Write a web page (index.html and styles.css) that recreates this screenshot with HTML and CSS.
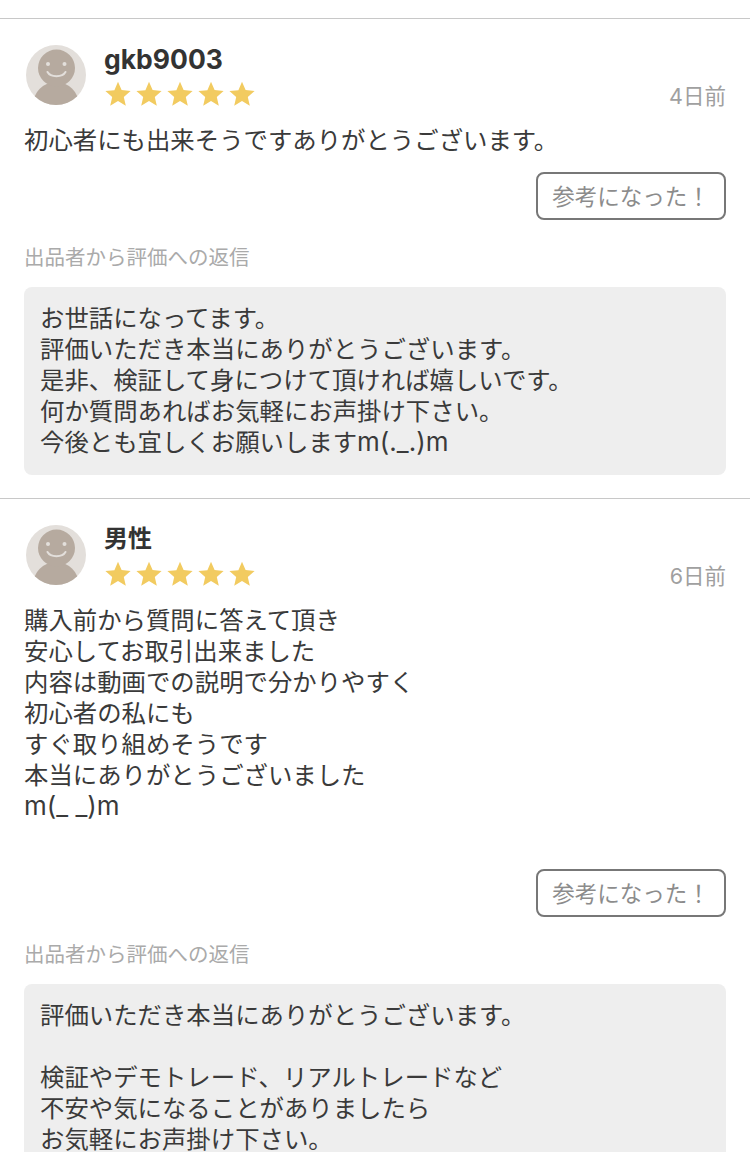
FILE: index.html
```html
<!DOCTYPE html>
<html lang="ja">
<head>
<meta charset="utf-8">
<title>評価</title>
<link rel="stylesheet" href="styles.css">
</head>
<body>
<svg class="defs" width="0" height="0" aria-hidden="true">
  <symbol id="star" viewBox="0 0 26 26"><path d="M13 .8l3.6 8.3 9 .8-6.800 6 2 8.800L13 20.100 5.200 24.800l2-8.800-6.800-6 9-.8z"/></symbol>
  <symbol id="avatar" viewBox="0 0 60 60">
    <circle cx="30" cy="30" r="30" fill="#e3dfdb"/>
    <clipPath id="avclip"><circle cx="30" cy="30" r="30"/></clipPath>
    <g clip-path="url(#avclip)"><ellipse cx="30" cy="60" rx="23" ry="23" fill="#b6aa9f"/></g>
    <circle cx="30.500" cy="23" r="18.500" fill="#b6aa9f"/>
    <circle cx="22" cy="19" r="2" fill="#e3dfdb"/>
    <circle cx="38.500" cy="19" r="2" fill="#e3dfdb"/>
    <path d="M21.500 27c3 5.500 15 5.500 18 0" fill="none" stroke="#e3dfdb" stroke-width="2" stroke-linecap="round"/>
  </symbol>
</svg>
<main class="list">
  <article class="review">
    <header class="head">
      <svg class="avatar"><use href="#avatar"/></svg>
      <div class="meta">
        <div class="name">gkb9003</div>
        <div class="stars">
          <svg class="star"><use href="#star"/></svg><svg class="star"><use href="#star"/></svg><svg class="star"><use href="#star"/></svg><svg class="star"><use href="#star"/></svg><svg class="star"><use href="#star"/></svg>
        </div>
      </div>
      <time class="date">4日前</time>
    </header>
    <p class="body">初心者にも出来そうですありがとうございます。</p>
    <div class="actions"><button class="helpful">参考になった！</button></div>
    <div class="reply-label">出品者から評価への返信</div>
    <div class="reply">お世話になってます。
評価いただき本当にありがとうございます。
是非、検証して身につけて頂ければ嬉しいです。
何か質問あればお気軽にお声掛け下さい。
今後とも宜しくお願いします<span class="latin">m(._.)m</span></div>
  </article>
  <article class="review">
    <header class="head">
      <svg class="avatar"><use href="#avatar"/></svg>
      <div class="meta">
        <div class="name name-cjk">男性</div>
        <div class="stars">
          <svg class="star"><use href="#star"/></svg><svg class="star"><use href="#star"/></svg><svg class="star"><use href="#star"/></svg><svg class="star"><use href="#star"/></svg><svg class="star"><use href="#star"/></svg>
        </div>
      </div>
      <time class="date">6日前</time>
    </header>
    <p class="body">購入前から質問に答えて頂き
安心してお取引出来ました
内容は動画での説明で分かりやすく
初心者の私にも
すぐ取り組めそうです
本当にありがとうございました
<span class="latin">m(_ _)m</span></p>
    <div class="actions actions-tall"><button class="helpful">参考になった！</button></div>
    <div class="reply-label">出品者から評価への返信</div>
    <div class="reply">評価いただき本当にありがとうございます。

検証やデモトレード、リアルトレードなど
不安や気になることがありましたら
お気軽にお声掛け下さい。</div>
  </article>
</main>
</body>
</html>
```
FILE: styles.css
```css
html, body {
  margin: 0;
  padding: 0;
  background: #fff;
}
body {
  height: 1152px;
  overflow: hidden;
  font-family: Inter, "Noto Sans CJK JP", sans-serif;
  color: #3a3a3a;
}
.defs {
  position: absolute;
}
.list {
  padding-top: 18px;
}
.review {
  border-top: 1px solid #c8c8c8;
  padding: 26px 24px 23px;
}
.head {
  display: flex;
  align-items: flex-start;
  height: 80px;
}
.avatar {
  width: 60px;
  height: 60px;
  margin-left: 2px;
  flex: none;
}
.meta {
  margin-left: 18px;
  flex: 1;
}
.name {
  font-size: 26.500px;
  font-weight: 700;
  line-height: 30px;
  margin-top: -1px;
  margin-bottom: 3px;
  color: #333;
}
.name-cjk {
  font-size: 24px;
  margin-top: -1px;
  margin-bottom: 3px;
}
.stars {
  display: flex;
  gap: 5px;
  margin-top: 7px;
  margin-left: 1px;
}
.star {
  width: 26px;
  height: 26px;
  fill: #f2cb60;
}
.date {
  font-size: 21.500px;
  line-height: 30px;
  margin-top: 36px;
  color: #a0a0a0;
}
.body {
  margin: 0;
  font-size: 24.400px;
  line-height: 31px;
  white-space: pre-line;
}
.latin {
  font-size: 26px;
  line-height: 1;
}
.actions {
  display: flex;
  justify-content: flex-end;
  margin-top: 16px;
}
.actions-tall {
  margin-top: 47px;
}
.helpful {
  width: 190px;
  height: 48px;
  padding: 0 0 2px;
  border: 2px solid #777;
  border-radius: 8px;
  background: #fff;
  color: #8c8c8c;
  font-family: inherit;
  font-size: 22.500px;
}
.reply-label {
  margin-top: 24px;
  font-size: 20.500px;
  line-height: 28px;
  color: #aaa;
}
.reply {
  margin-top: 15px;
  padding: 16px 16px 17px;
  background: #eee;
  border-radius: 8px;
  font-size: 24.400px;
  line-height: 31px;
  white-space: pre-line;
}
```
